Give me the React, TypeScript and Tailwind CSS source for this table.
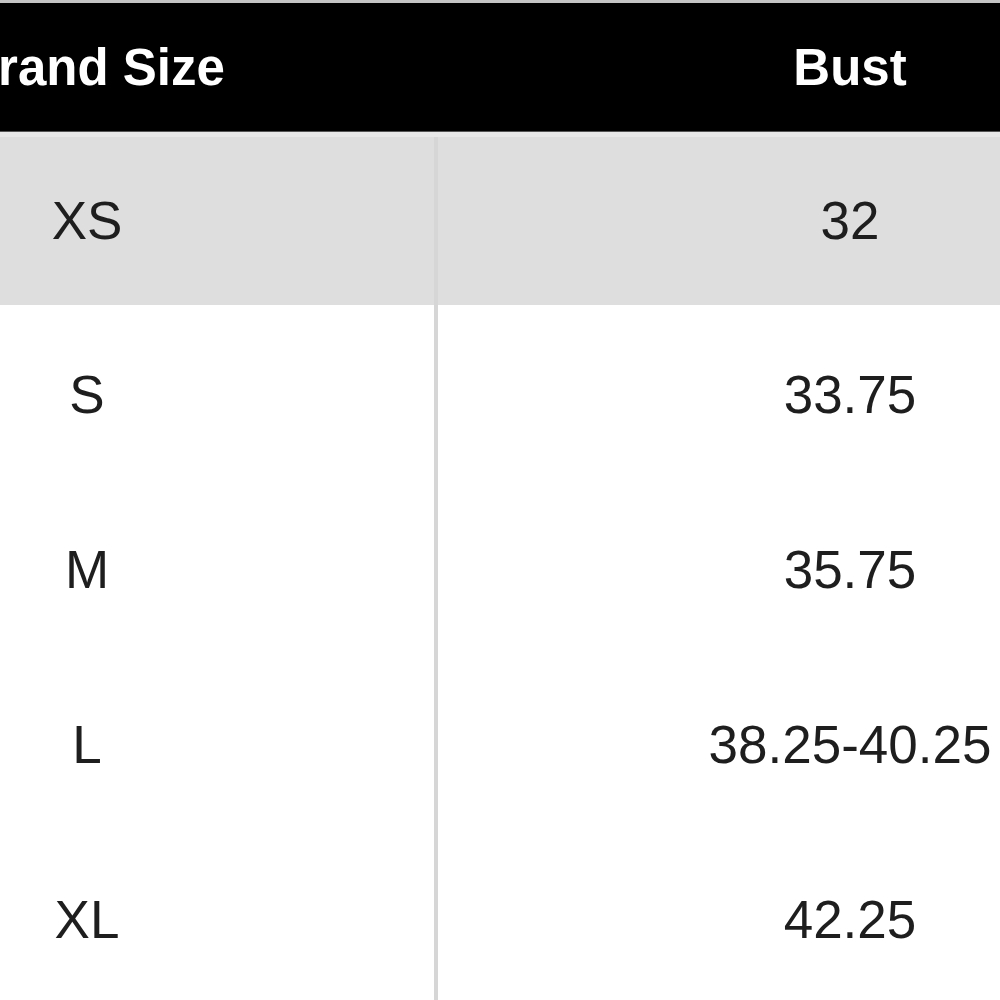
import React from "react";

const rows = [
  { size: "XS", bust: "32" },
  { size: "S", bust: "33.75" },
  { size: "M", bust: "35.75" },
  { size: "L", bust: "38.25-40.25" },
  { size: "XL", bust: "42.25" },
];

export default function App() {
  return (
    <div
      className="w-[1000px] h-[1000px] overflow-hidden bg-white"
      style={{ fontFamily: '"Liberation Sans", Arial, Helvetica, sans-serif' }}
    >
      <div className="ml-[-260px] w-[1522px]">
        <div className="border-t-[3px] border-b border-t-[#c4c4c4] border-b-[#555555] bg-black h-[132px] grid grid-cols-[694px_4px_824px] items-center text-white font-bold text-[51px]">
          <div className="text-center pl-[12px] leading-none">Brand Size</div>
          <div />
          <div className="text-center leading-none">Bust</div>
        </div>
        {rows.map((r, i) => (
          <div
            key={r.size}
            className={
              i === 0
                ? "grid grid-cols-[694px_4px_824px] h-[173px] bg-[#dedede] border-t-[5px] border-[#e8e8e8] text-[#1e1e1e] text-[53px]"
                : "grid grid-cols-[694px_4px_824px] h-[175px] bg-white text-[#1e1e1e] text-[53px]"
            }
          >
            <div className={i === 0 ? "flex items-center justify-center leading-none pb-[2px]" : "flex items-center justify-center leading-none pt-[4px]"}>{r.size}</div>
            <div className="bg-[#d6d6d6]" />
            <div className={i === 0 ? "flex items-center justify-center leading-none pb-[2px]" : "flex items-center justify-center leading-none pt-[4px]"}>{r.bust}</div>
          </div>
        ))}
      </div>
    </div>
  );
}
